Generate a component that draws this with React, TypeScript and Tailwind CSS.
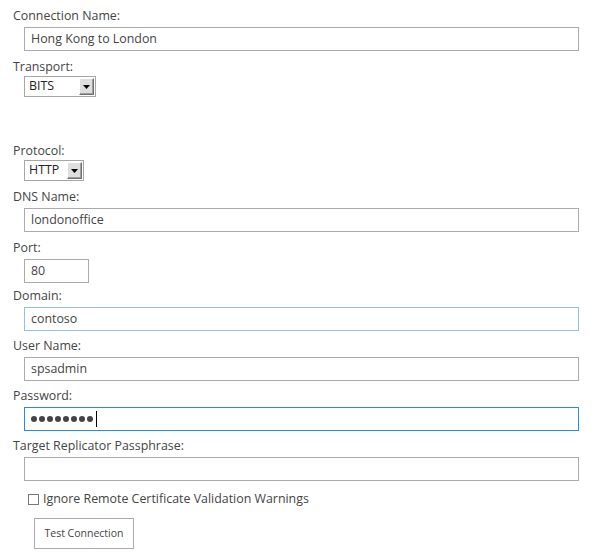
import React from "react";

const font = { fontFamily: '"Segoe UI", "Open Sans", "Noto Sans", sans-serif' };

function Label({ children, className = "" }: { children: React.ReactNode; className?: string }) {
  return <div className={`h-[18px] text-[12.4px] leading-[18px] text-[#444] ${className}`}>{children}</div>;
}

function TextBox({
  value,
  border = "border-[#ababab]",
  className = "",
  children,
}: {
  value?: string;
  border?: string;
  className?: string;
  children?: React.ReactNode;
}) {
  return (
    <div
      className={`ml-[11px] flex h-[24px] items-center border ${border} bg-white px-[6px] text-[12.4px] text-[#444] ${className}`}
    >
      {children ?? value}
    </div>
  );
}

function Select({ value, width }: { value: string; width: string }) {
  return (
    <div className={`ml-[11px] flex h-[21px] ${width} items-center border border-[#a6a6a6] bg-white pl-[4px] pr-[1px]`}>
      <span className="flex-1 text-[12.4px] leading-none text-[#222]">{value}</span>
      <span className="flex h-[17px] w-[15px] items-center justify-center border border-t-white border-l-white border-r-[#6e6e6e] border-b-[#6e6e6e] bg-[#dedede] shadow-[inset_-1px_-1px_0_#a0a0a0]">
        <svg width="7" height="4" viewBox="0 0 7 4">
          <path d="M0 0h7L3.5 4z" fill="#000" />
        </svg>
      </span>
    </div>
  );
}

export default function App() {
  return (
    <div className="w-[598px] h-[553px] bg-white pl-[13px] pr-[19px] pt-[7px]" style={font}>
      <Label>Connection Name:</Label>
      <TextBox className="mt-[2px]" value="Hong Kong to London" />

      <Label className="mt-[7px]">Transport:</Label>
      <Select value="BITS" width="w-[72px]" />

      <Label className="mt-[45px]">Protocol:</Label>
      <Select value="HTTP" width="w-[60px]" />

      <Label className="mt-[7px]">DNS Name:</Label>
      <TextBox className="mt-[2px]" value="londonoffice" />

      <Label className="mt-[7px]">Port:</Label>
      <TextBox className="mt-[2px] w-[65px]" value="80" />

      <Label className="mt-[4px]">Domain:</Label>
      <TextBox className="mt-[2px]" border="border-[#92c0e0]" value="contoso" />

      <Label className="mt-[6px]">User Name:</Label>
      <TextBox className="mt-[2px]" value="spsadmin" />

      <Label className="mt-[6px]">Password:</Label>
      <TextBox className="mt-[2px]" border="border-[#2a8dd4]">
        <span className="flex items-center gap-[2px]">
          {Array.from({ length: 8 }).map((_, i) => (
            <span key={i} className="h-[6px] w-[6px] rounded-full bg-[#444]" />
          ))}
          <span className="ml-[1px] h-[16px] w-px bg-black" />
        </span>
      </TextBox>

      <Label className="mt-[6px]">Target Replicator Passphrase:</Label>
      <TextBox className="mt-[2px]" />

      <div className="mt-[9px] ml-[15px] flex h-[18px] items-center gap-[4px] text-[12.4px] text-[#444]">
        <span className="h-[11px] w-[11px] border border-[#777] bg-white" />
        <span>Ignore Remote Certificate Validation Warnings</span>
      </div>

      <div className="mt-[10px] ml-[21px] flex h-[31px] w-[100px] items-center justify-center border border-[#ababab] bg-white text-[10.5px] text-[#444]">
        Test Connection
      </div>
    </div>
  );
}
